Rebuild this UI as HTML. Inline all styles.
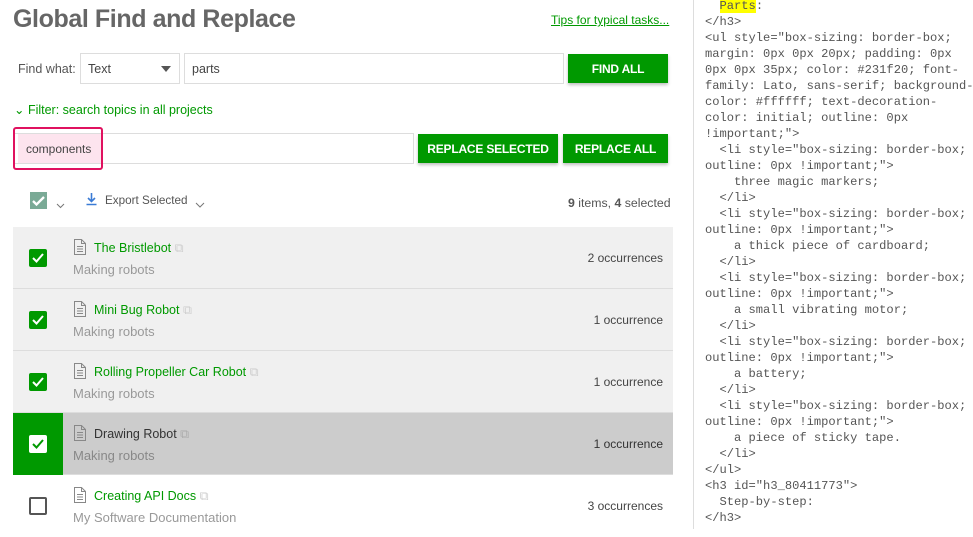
<!DOCTYPE html>
<html><head><style>
*{box-sizing:border-box;margin:0;padding:0}
body{width:973px;height:529px;overflow:hidden;background:#fff;font-family:"Liberation Sans",sans-serif;position:relative;color:#444}
.a{position:absolute}
h1{position:absolute;left:13px;top:5px;font-size:25px;font-weight:bold;color:#666;letter-spacing:-0.4px}
.tips{left:551px;top:13px;font-size:12px;color:#090;text-decoration:underline}
.inp{position:absolute;border:1px solid #ddd;background:#fff;font-size:12.5px;color:#444;padding-left:7px;display:flex;align-items:center}
.btn{position:absolute;background:#090;color:#fff;font-weight:bold;font-size:12px;letter-spacing:-0.2px;display:flex;align-items:center;justify-content:center;box-shadow:0 2px 3px rgba(0,0,0,.25)}
.row{position:absolute;left:13px;width:660px;height:62px;background:#f0f0f0;border-bottom:1px solid #ddd}
.cb{position:absolute;left:16px;top:22px;width:18px;height:18px;background:#090;border-radius:2px}
.cb svg{position:absolute;left:2px;top:2px}
.doc{position:absolute;left:61px;top:12px}
.t{position:absolute;left:81px;top:14px;font-size:12.5px;color:#090}
.s{position:absolute;left:60px;top:35px;font-size:13px;color:#999}
.o{position:absolute;right:10px;top:24px;font-size:12px;color:#444}
pre{position:absolute;left:705px;top:-2px;font-family:"Liberation Mono",monospace;font-size:12.1px;line-height:16px;color:#555}
</style></head><body>
<h1>Global Find and Replace</h1>
<div class="a tips">Tips for typical tasks...</div>
<div class="a" style="left:18px;top:62px;font-size:12.5px;color:#555">Find what:</div>
<div class="inp" style="left:80px;top:53px;width:100px;height:31px">Text<span style="position:absolute;right:8px;top:12px;border:5px solid transparent;border-top:6px solid #555;border-bottom:0"></span></div>
<div class="inp" style="left:184px;top:53px;width:380px;height:31px">parts</div>
<div class="btn" style="left:568px;top:54px;width:100px;height:29px">FIND ALL</div>
<div class="a" style="left:14px;top:102px;font-size:12.5px;color:#090">⌄ Filter: search topics in all projects</div>
<div class="inp" style="left:14px;top:133px;width:400px;height:31px"></div>
<div class="a" style="left:18px;top:134px;width:84px;height:29px;background:#fde4ee;font-size:12px;padding:8px 0 0 8px;color:#444">components</div>
<div class="a" style="left:13px;top:127px;width:90px;height:43px;border:2px solid #e0115f;border-radius:3px"></div>
<div class="btn" style="left:418px;top:134px;width:140px;height:29px">REPLACE SELECTED</div>
<div class="btn" style="left:563px;top:134px;width:105px;height:29px">REPLACE ALL</div>
<div class="a" style="left:30px;top:192px;width:17px;height:17px;background:#7aaa96"><svg width="17" height="17"><path d="M3 9l3.5 3.5L14 5" stroke="#fff" stroke-width="2.3" fill="none"/></svg></div>
<div class="a" style="left:56px;top:196px"><svg width="9" height="6"><path d="M1 1l3.5 3.5L8 1" stroke="#777" fill="none"/></svg></div>
<div class="a" style="left:85px;top:192px"><svg width="13" height="14"><path d="M6.5 1v8M3 6l3.5 3.5L10 6M1.5 12.5h10" stroke="#3a7bd5" stroke-width="1.6" fill="none"/></svg></div>
<div class="a" style="left:105px;top:194px;font-size:11.7px;color:#555">Export Selected</div>
<div class="a" style="left:195px;top:196px"><svg width="10" height="7"><path d="M1 1l4 4 4-4" stroke="#777" fill="none"/></svg></div>
<div class="a" style="left:568px;top:196px;font-size:12.3px;color:#555"><b>9</b> items, <b>4</b> selected</div>

<div class="row" style="top:227px"><div class="cb"><svg width="14" height="14"><path d="M2 7l3.5 3.5L12 3" stroke="#fff" stroke-width="2" fill="none"/></svg></div><svg class="doc" width="12" height="16"><path d="M.5.5h7l4 4v11H.5zM7.5.5v4h4M3 7.5h6M3 10h6M3 12.5h6" stroke="#888" fill="none"/></svg><div class="t">The Bristlebot <span style="color:#ccc">⧉</span></div><div class="s">Making robots</div><div class="o">2 occurrences</div></div>
<div class="row" style="top:289px"><div class="cb"><svg width="14" height="14"><path d="M2 7l3.5 3.5L12 3" stroke="#fff" stroke-width="2" fill="none"/></svg></div><svg class="doc" width="12" height="16"><path d="M.5.5h7l4 4v11H.5zM7.5.5v4h4M3 7.5h6M3 10h6M3 12.5h6" stroke="#888" fill="none"/></svg><div class="t">Mini Bug Robot <span style="color:#ccc">⧉</span></div><div class="s">Making robots</div><div class="o">1 occurrence</div></div>
<div class="row" style="top:351px"><div class="cb"><svg width="14" height="14"><path d="M2 7l3.5 3.5L12 3" stroke="#fff" stroke-width="2" fill="none"/></svg></div><svg class="doc" width="12" height="16"><path d="M.5.5h7l4 4v11H.5zM7.5.5v4h4M3 7.5h6M3 10h6M3 12.5h6" stroke="#888" fill="none"/></svg><div class="t">Rolling Propeller Car Robot <span style="color:#ccc">⧉</span></div><div class="s">Making robots</div><div class="o">1 occurrence</div></div>
<div class="row" style="top:413px;background:#ccc"><div style="position:absolute;left:0;top:0;width:50px;height:62px;background:#090"></div><div class="cb" style="background:#fff"><svg width="14" height="14"><path d="M2 7l3.5 3.5L12 3" stroke="#090" stroke-width="2" fill="none"/></svg></div><svg class="doc" width="12" height="16"><path d="M.5.5h7l4 4v11H.5zM7.5.5v4h4M3 7.5h6M3 10h6M3 12.5h6" stroke="#888" fill="none"/></svg><div class="t" style="color:#333">Drawing Robot <span style="color:#aaa">⧉</span></div><div class="s" style="color:#888">Making robots</div><div class="o" style="color:#333">1 occurrence</div></div>
<div class="row" style="top:475px;background:#fff;border:0"><div class="cb" style="background:#fff;border:2px solid #555"></div><svg class="doc" width="12" height="16"><path d="M.5.5h7l4 4v11H.5zM7.5.5v4h4M3 7.5h6M3 10h6M3 12.5h6" stroke="#888" fill="none"/></svg><div class="t">Creating API Docs <span style="color:#ccc">⧉</span></div><div class="s">My Software Documentation</div><div class="o">3 occurrences</div></div>

<div class="a" style="left:693px;top:0;width:1px;height:529px;background:#ddd"></div>
<pre>  <span style="background:#ff0">Parts</span>:
&lt;/h3&gt;
&lt;ul style="box-sizing: border-box;
margin: 0px 0px 20px; padding: 0px
0px 0px 35px; color: #231f20; font-
family: Lato, sans-serif; background-
color: #ffffff; text-decoration-
color: initial; outline: 0px
!important;"&gt;
  &lt;li style="box-sizing: border-box;
outline: 0px !important;"&gt;
    three magic markers;
  &lt;/li&gt;
  &lt;li style="box-sizing: border-box;
outline: 0px !important;"&gt;
    a thick piece of cardboard;
  &lt;/li&gt;
  &lt;li style="box-sizing: border-box;
outline: 0px !important;"&gt;
    a small vibrating motor;
  &lt;/li&gt;
  &lt;li style="box-sizing: border-box;
outline: 0px !important;"&gt;
    a battery;
  &lt;/li&gt;
  &lt;li style="box-sizing: border-box;
outline: 0px !important;"&gt;
    a piece of sticky tape.
  &lt;/li&gt;
&lt;/ul&gt;
&lt;h3 id="h3_80411773"&gt;
  Step-by-step:
&lt;/h3&gt;</pre>
</body></html>
